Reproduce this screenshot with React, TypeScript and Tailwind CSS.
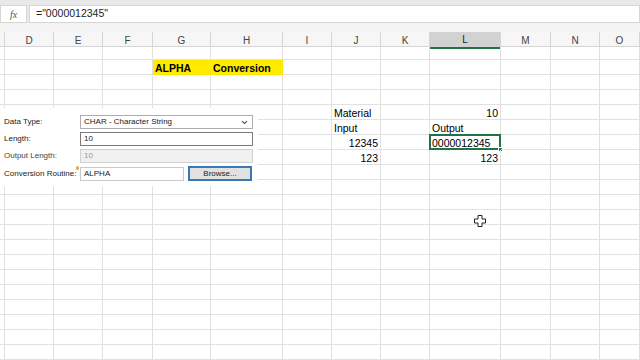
import React from 'react'

type Cell = { text: string; right?: boolean; bold?: boolean }

const cols = ['C', 'D', 'E', 'F', 'G', 'H', 'I', 'J', 'K', 'L', 'M', 'N', 'O']

const data: Record<string, Cell> = {
  '1-G': { text: 'ALPHA', bold: true },
  '1-H': { text: 'Conversion', bold: true },
  '4-J': { text: 'Material' },
  '4-L': { text: '10', right: true },
  '5-J': { text: 'Input' },
  '5-L': { text: 'Output' },
  '6-J': { text: '12345', right: true },
  '6-L': { text: '0000012345' },
  '7-J': { text: '123', right: true },
  '7-L': { text: '123', right: true },
}

const yellow = new Set(['1-G', '1-H'])
const rows = Array.from({ length: 21 }, (_, i) => i)

const gridCols =
  'grid grid-cols-[5px_49px_49px_50px_58px_72px_49px_49px_49px_71px_50px_49px_1fr]'

function SheetCell({ r, c }: { r: number; c: string }) {
  const key = `${r}-${c}`
  const cell = data[key]
  const isYellow = yellow.has(key)
  const selected = key === '6-L'
  return (
    <div
      className={`relative flex items-end pb-0 border-b border-r overflow-visible whitespace-nowrap ${
        r === 0 ? 'h-[13px]' : 'h-[15px]'
      } ${isYellow ? 'bg-[#ffea00] border-[#ffea00]' : 'border-[#e1e1e1]'} ${
        cell?.right ? 'justify-end pr-[2px]' : 'pl-[2px]'
      }`}
    >
      {cell && (
        <span className={`leading-[12px] ${cell.bold ? 'font-bold' : ''}`}>{cell.text}</span>
      )}
      {selected && (
        <>
          <div className="absolute -left-[1px] -top-[1px] right-[-1px] bottom-[-1px] border-2 border-[#217346]" />
          <div className="absolute -right-[3px] -bottom-[3px] w-[5px] h-[5px] bg-[#217346] border border-white" />
        </>
      )}
    </div>
  )
}

function Field({ children, className = '' }: { children?: React.ReactNode; className?: string }) {
  return (
    <div className={`h-[14px] flex items-center px-[3px] border ${className}`}>{children}</div>
  )
}

export default function App() {
  return (
    <div
      className="relative w-[640px] h-[360px] overflow-hidden bg-white text-black"
      style={{ fontFamily: '"Liberation Sans", Arial, sans-serif' }}
    >
      {/* formula bar */}
      <div className="h-[5px] bg-[#e9e9e9]" />
      <div className="h-[18px] flex bg-[#e9e9e9]">
        <div className="w-[27px] bg-white border border-[#d6d6d6] flex items-center justify-center">
          <span className="italic text-[10px] text-[#555]" style={{ fontFamily: '"Liberation Serif", serif' }}>
            fx
          </span>
        </div>
        <div className="flex-1 ml-[2px] bg-white border border-[#d6d6d6] flex items-center pl-[6px] text-[10.5px] text-[#222]">
          ="0000012345"
        </div>
      </div>
      <div className="h-[9px] bg-[#f3f3f3]" />

      {/* column headers */}
      <div className={`${gridCols} h-[15px] bg-[#f6f6f6] border-b border-[#d4d4d4]`}>
        {cols.map(c => (
          <div
            key={c}
            className={`flex items-center justify-center text-[10px] border-r border-[#d4d4d4] ${
              c === 'L' ? 'bg-[#d2d2d2] border-b-2 border-b-[#217346] text-[#222]' : 'text-[#444]'
            }`}
          >
            {c === 'C' ? '' : c}
          </div>
        ))}
      </div>

      {/* grid */}
      <div className={`${gridCols} text-[10.5px]`}>
        {rows.map(r => cols.map(c => <SheetCell key={`${r}-${c}`} r={r} c={c} />))}
      </div>

      {/* dialog panel */}
      <div className="absolute left-0 top-[108px] w-[258px] h-[78px] bg-white pt-[7px] text-[8px] text-[#222] flex flex-col gap-[3px]">
        <div className="flex items-center">
          <span className="w-[80px] pl-[4px]">Data Type:</span>
          <Field className="w-[173px] border-[#adadad] justify-between">
            <span>CHAR - Character String</span>
            <svg width="7" height="5" viewBox="0 0 7 5" className="mr-[1px]">
              <path d="M1 1.2 L3.5 3.6 L6 1.2" fill="none" stroke="#444" strokeWidth="1.1" />
            </svg>
          </Field>
        </div>
        <div className="flex items-center">
          <span className="w-[80px] pl-[4px]">Length:</span>
          <Field className="w-[173px] border-[#7a7a7a]">10</Field>
        </div>
        <div className="flex items-center">
          <span className="w-[80px] pl-[4px] text-[#444]">Output Length:</span>
          <Field className="w-[173px] border-[#d0d0d0] bg-[#f0f0f0] text-[#9a9a9a]">10</Field>
        </div>
        <div className="flex items-center">
          <span className="relative w-[80px] pl-[4px]">
            Conversion Routine:
            <span className="absolute right-[1px] -top-[2px] w-[3px] h-[4px] rounded-full bg-[#e0b040]" />
          </span>
          <Field className="w-[104px] border-[#c8c8c8]">ALPHA</Field>
          <div className="ml-[4px] w-[64px] h-[15px] bg-[#e1e1e1] border-2 border-[#3a78b5] flex items-center justify-center">
            Browse...
          </div>
        </div>
      </div>

      {/* mouse cursor */}
      <svg className="absolute left-[474px] top-[215px]" width="12" height="12" viewBox="0 0 12 12">
        <path
          d="M4 0.5 H8 V4 H11.5 V8 H8 V11.5 H4 V8 H0.5 V4 H4 Z"
          fill="white"
          stroke="#222"
          strokeWidth="1"
        />
      </svg>
    </div>
  )
}
